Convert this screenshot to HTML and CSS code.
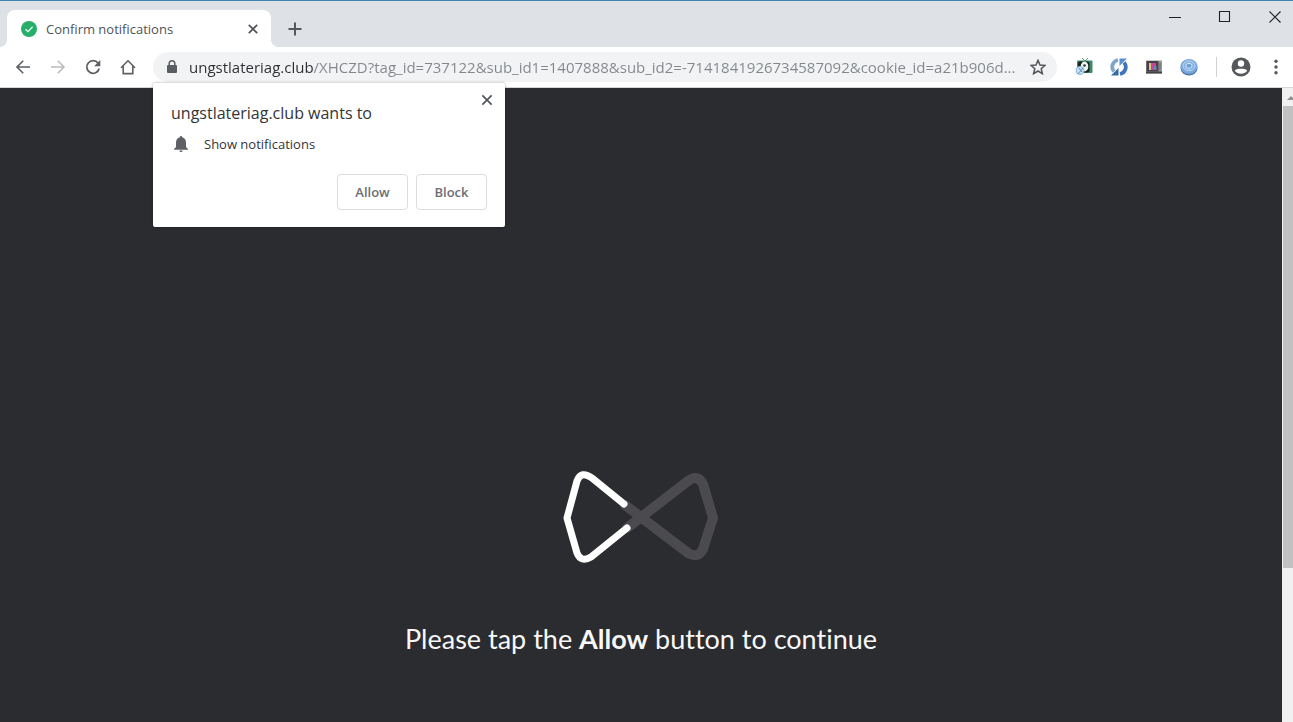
FILE: index.html
```html
<!DOCTYPE html>
<html lang="en">
<head>
<meta charset="utf-8">
<title>Confirm notifications</title>
<link rel="stylesheet" href="styles.css">
</head>
<body>
<div class="window">
  <header class="tabstrip">
    <div class="tab">
      <svg class="favicon" viewBox="0 0 16 16"><circle cx="8" cy="8" r="8" fill="#27ae6b"/><path d="M4.5 8.2l2.5 2.4 4.600-4.800" fill="none" stroke="#e8fff2" stroke-width="1.3"/></svg>
      <span class="tab-title">Confirm notifications</span>
      <button class="icon-button small" aria-label="Close tab"><svg viewBox="0 0 16 16"><path d="M3.200 3.200l9.600 9.600M12.800 3.200l-9.600 9.600" fill="none" stroke="#505357" stroke-width="1.900"/></svg></button>
    </div>
    <button class="icon-button new-tab" aria-label="New tab"><svg viewBox="0 0 16 16"><path d="M8 1.500v13M1.500 8h13" fill="none" stroke="#54575b" stroke-width="2"/></svg></button>
    <div class="window-controls">
      <button class="window-button" aria-label="Minimize"><svg viewBox="0 0 12 12"><path d="M0 6.500h12" fill="none" stroke="#222"/></svg></button>
      <button class="window-button" aria-label="Maximize"><svg viewBox="0 0 12 12"><path d="M.5.5h10v10H.5z" fill="none" stroke="#222" stroke-width="1.100"/></svg></button>
      <button class="window-button" aria-label="Close"><svg viewBox="0 0 12 12"><path d="M.5.5l11 11M11.500.5l-11 11" fill="none" stroke="#222" stroke-width="1.100"/></svg></button>
    </div>
  </header>

  <nav class="toolbar">
    <div class="nav-buttons">
      <button class="icon-button" aria-label="Back"><svg viewBox="0 0 16 16"><path d="M15 8H2M8.200 1.800L2 8l6.200 6.200" fill="none" stroke="#5c5f63" stroke-width="1.600"/></svg></button>
      <button class="icon-button" aria-label="Forward"><svg viewBox="0 0 16 16"><path d="M1 8h13M7.800 1.800L14 8l-6.200 6.200" fill="none" stroke="#babcbe" stroke-width="1.600"/></svg></button>
      <button class="icon-button" aria-label="Reload"><svg viewBox="0 0 16 16"><path d="M13.100 4.200A6.300 6.300 0 1 0 14.200 9.500" fill="none" stroke="#5c5f63" stroke-width="1.800"/><path d="M15.300 1v6.200H9.100z" fill="#5c5f63"/></svg></button>
      <button class="icon-button" aria-label="Home"><svg viewBox="0 0 16 16"><path d="M1 8.700L8 1.800l7 6.900M3.200 7.200v7.400h9.600V7.200" fill="none" stroke="#5c5f63" stroke-width="1.600"/></svg></button>
    </div>
    <div class="omnibox">
      <svg class="lock" viewBox="0 0 10 14"><path d="M2.200 6V3.600a2.800 2.800 0 0 1 5.600 0V6" fill="none" stroke="#5a5d61" stroke-width="1.500"/><rect y="5" width="10" height="8" rx="1" fill="#5a5d61"/></svg>
      <input class="address" type="text" aria-label="Address" value="ungstlateriag.club/XHCZD?tag_id=737122&amp;sub_id1=1407888&amp;sub_id2=-7141841926734587092&amp;cookie_id=a21b906d...">
      <button class="icon-button" aria-label="Bookmark this page"><svg viewBox="0 0 16 16"><path d="M8 1.300l2 4.700 5 .4-3.800 3.300 1.200 5L8 12l-4.400 2.700 1.200-5L1 6.400l5-.4z" fill="none" stroke="#54575b" stroke-width="1.500"/></svg></button>

      <section class="prompt" aria-label="Permission request">
        <button class="icon-button small prompt-close" aria-label="Dismiss"><svg viewBox="0 0 16 16"><path d="M2.700 2.700l10.600 10.600M13.300 2.700L2.700 13.300" fill="none" stroke="#505357" stroke-width="1.900"/></svg></button>
        <h2 class="prompt-title">ungstlateriag.club wants to</h2>
        <p class="permission">
          <svg class="bell" viewBox="0 0 14 16"><path d="M7 0c.8 0 1.200.6 1.200 1.300C10.600 1.900 12 3.900 12 6.500V11l2 1.900v.8H0v-.8L2 11V6.500c0-2.600 1.400-4.600 3.800-5.200C5.800.6 6.200 0 7 0zM5.300 14.500h3.400a1.700 1.500 0 0 1-3.400 0z" fill="#5f6065"/></svg>
          <span>Show notifications</span>
        </p>
        <div class="prompt-actions">
          <button class="choice">Allow</button>
          <button class="choice">Block</button>
        </div>
      </section>
    </div>
    <div class="extensions">
      <button class="icon-button ext" aria-label="TV extension"><svg viewBox="0 0 18 18"><path d="M7 0l3 3 3-3" fill="none" stroke="#54a77f"/><rect x="2" y="2.500" width="15.500" height="12.500" rx="1" fill="#3b8b69"/><rect x="3" y="3.500" width="11.500" height="11" rx="2" fill="#17231f"/><ellipse cx="9.500" cy="8.500" rx="3.800" ry="5" fill="#eef4ef"/><circle cx="9.500" cy="7.500" r="1.300" fill="#333"/><circle cx="5" cy="12.500" r="4" fill="#c9dff0" stroke="#8db4da"/><path d="M3 16l5-6M4 10l3 4" stroke="#5b8fc5"/></svg></button>
      <button class="icon-button ext" aria-label="Sync extension"><svg viewBox="0 0 18 18"><path d="M8 2A7 7 0 0 0 4 13.500" fill="none" stroke="#7fa5cf" stroke-width="3.800"/><path d="M1 17.500h7.500V10z" fill="#3768a5"/><path d="M10 16A7 7 0 0 0 14 4.500" fill="none" stroke="#3f74ba" stroke-width="3.800"/><path d="M17 .5H9.500V8z" fill="#5b8fcc"/></svg></button>
      <button class="icon-button ext" aria-label="Screen extension"><svg viewBox="0 0 18 18"><rect x="1" y="2.500" width="16" height="13" fill="#9b9b96"/><rect x="1.500" y="3" width="12" height="10.500" fill="#45404a"/><rect x="4" y="5" width="7" height="7" fill="#c8439b"/><rect x="4" y="5" width="2" height="7" fill="#d9c67e"/><rect x="9" y="8" width="2.500" height="4" fill="#7080b8"/><path d="M1 14.500h16" stroke="#45434a" stroke-width="2"/><path d="M15 5v7" stroke="#65655f"/></svg></button>
      <button class="icon-button ext" aria-label="Disc extension"><svg viewBox="0 0 18 18"><ellipse cx="9" cy="10" rx="8.500" ry="7.500" fill="#4b78ac"/><ellipse cx="9" cy="8.500" rx="8.500" ry="7.500" fill="#78a7dc"/><ellipse cx="9" cy="7.800" rx="6" ry="5" fill="#8cb6e5" stroke="#b9d6f2"/><ellipse cx="9" cy="7.800" rx="3" ry="2.500" fill="#6b9fd8" stroke="#d0e5f9"/></svg></button>
    </div>
    <div class="profile">
      <button class="icon-button avatar" aria-label="Profile"><svg viewBox="0 0 20 20"><circle cx="10" cy="10" r="9.500" fill="#54575b"/><circle cx="10" cy="6.500" r="3.200" fill="#fff"/><path d="M3.800 13.800c1-2.600 11.400-2.600 12.400 0-2.600 3.900-9.800 3.900-12.400 0z" fill="#fff"/></svg></button>
      <button class="icon-button" aria-label="Menu"><svg viewBox="0 0 16 16"><g fill="#54575b"><circle cx="8" cy="2.200" r="1.700"/><circle cx="8" cy="8" r="1.700"/><circle cx="8" cy="13.800" r="1.700"/></g></svg></button>
    </div>
  </nav>

  <div class="viewport">
    <main class="page">
      <svg class="loader" viewBox="0 0 160 100">
        <g fill="none" stroke-linejoin="round" stroke-linecap="round">
          <path d="M64 38L127 86Q137 92 142 82L152 51 142 17Q137 7 127 14L66 61" stroke="#4b4b4f" stroke-width="10"/>
          <path d="M63 37L31 11Q20 3 16 14L6 51l10 35q4 10 14 4L66 61" stroke="#fff" stroke-width="7"/>
        </g>
      </svg>
      <p class="message">Please tap the <strong>Allow</strong> button to continue</p>
    </main>
    <div class="scrollbar">
      <svg class="scroll-arrow" viewBox="0 0 10 18"><path d="M4 12l4-4 2 2v2z" fill="#909090"/></svg>
      <div class="scroll-thumb"></div>
      <div class="scroll-rest"></div>
    </div>
  </div>
</div>
</body>
</html>
```
FILE: styles.css
```css
* { box-sizing: border-box; }

body {
  margin: 0;
  font-family: "Open Sans", "Noto Sans", sans-serif;
  color: #333438;
}

.window {
  display: flex;
  flex-direction: column;
  min-height: 100vh;
  background: #fff;
}

button {
  font-family: inherit;
  padding: 0;
  border: 0;
  background: none;
}

.icon-button {
  display: flex;
  flex: none;
  align-items: center;
  justify-content: center;
  width: 16px;
  height: 16px;
}

.icon-button svg { width: 100%; height: 100%; }
.icon-button.small { width: 14px; height: 14px; }
.icon-button.ext { width: 18px; height: 18px; }
.icon-button.avatar { width: 20px; height: 20px; }

/* Tab strip */
.tabstrip {
  display: flex;
  align-items: flex-end;
  height: 47px;
  padding-left: 7px;
  border-top: 1px solid #4480b0;
  background: #dee1e6;
}

.tab {
  position: relative;
  display: flex;
  align-items: center;
  width: 264px;
  height: 37px;
  padding: 0 11px 0 14px;
  border-radius: 8px 8px 0 0;
  background: #fff;
}

.tab::before,
.tab::after {
  content: "";
  position: absolute;
  bottom: 0;
  width: 8px;
  height: 8px;
}

.tab::before {
  right: 100%;
  background: radial-gradient(circle at 0 0, transparent 8px, #fff 8px);
}

.tab::after {
  left: 100%;
  background: radial-gradient(circle at 100% 0, transparent 8px, #fff 8px);
}

.favicon { width: 16px; height: 16px; margin-right: 9px; }

.tab-title {
  flex: 1;
  font-size: 13px;
  line-height: 20px;
  color: #505357;
  white-space: nowrap;
}

.new-tab { margin: 0 0 10px 16px; }

.window-controls {
  display: flex;
  align-self: flex-start;
  gap: 38px;
  margin-left: auto;
  padding: 10px 12px 0 0;
}

.window-button { display: flex; width: 12px; height: 12px; }
.window-button svg { width: 12px; height: 12px; overflow: visible; }

/* Toolbar */
.toolbar {
  display: flex;
  align-items: center;
  height: 41px;
  padding: 0 9px 0 15px;
  border-bottom: 1px solid #d5d6d8;
}

.nav-buttons { display: flex; gap: 19px; }

.omnibox {
  position: relative;
  display: flex;
  flex: 1;
  align-items: center;
  height: 30px;
  margin-left: 17px;
  padding: 0 11px 0 14px;
  border-radius: 15px;
  background: #f1f3f4;
}

.lock { flex: none; width: 10px; height: 14px; margin-right: 12px; }

.address {
  flex: 1;
  min-width: 0;
  height: 24px;
  padding: 0;
  border: 0;
  outline: 0;
  font-family: inherit;
  font-size: 15px;
  color: transparent;
  background: linear-gradient(to right, #2c2e32 124px, #83868a 124px);
  -webkit-background-clip: text;
  background-clip: text;
}

.extensions { display: flex; gap: 17px; margin-left: 18px; }

.profile {
  display: flex;
  align-items: center;
  gap: 17px;
  margin-left: 18px;
  padding-left: 14px;
  border-left: 1px solid #cfd1d4;
}

/* Permission prompt */
.prompt {
  position: absolute;
  z-index: 1;
  top: 31px;
  left: 0;
  width: 352px;
  padding: 17px 18px;
  border-radius: 2px;
  background: #fff;
  box-shadow: 0 0 3px rgba(0, 0, 0, 0.35);
}

.prompt-close { position: absolute; top: 10px; right: 11px; }

.prompt-title {
  margin: 0;
  font-size: 16px;
  font-weight: 400;
  line-height: 26px;
}

.permission {
  display: flex;
  align-items: center;
  gap: 16px;
  margin: 8px 0 20px 3px;
  font-size: 13px;
  line-height: 20px;
}

.bell { width: 14px; height: 16px; }

.prompt-actions { display: flex; justify-content: flex-end; gap: 8px; }

.choice {
  width: 71px;
  height: 36px;
  border: 1px solid #dadce0;
  border-radius: 4px;
  font-size: 13px;
  font-weight: 600;
  color: #6c6e72;
}

/* Page content */
.viewport { display: flex; flex: 1; }

.page {
  display: flex;
  flex: 1;
  flex-direction: column;
  align-items: center;
  justify-content: flex-end;
  padding-bottom: 63px;
  background: #2b2c30;
}

.loader { width: 160px; height: 100px; }

.message {
  margin: 52px 0 0;
  font-family: Lato, "Open Sans", sans-serif;
  font-size: 27px;
  font-variant-ligatures: none;
  line-height: 40px;
  color: #f8f8f8;
}

.scrollbar {
  display: flex;
  flex-direction: column;
  width: 11px;
  padding-left: 1px;
  background: #f1f1f1;
}

.scroll-arrow { width: 10px; height: 18px; }
.scroll-thumb { flex: 3; background: #c1c1c1; }
.scroll-rest { flex: 1; }
```
